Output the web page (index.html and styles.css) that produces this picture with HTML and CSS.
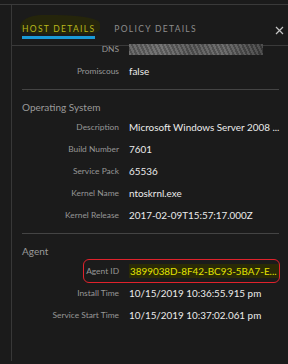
FILE: index.html
```html
<html>
  <head>
    <meta charset="utf-8">
    <title>Host Details</title>
    <link rel="stylesheet" href="styles.css">
  </head>
  <body>
    <div class="frame">
      <div class="rail"></div>
      <div class="panel">
        <div class="tabs">
          <span class="mark"></span>
          <span class="tab active">HOST DETAILS</span>
          <span class="tab">POLICY DETAILS</span>
          <svg class="close" width="9" height="9" viewBox="0 0 9 9"><path d="M1 1L8 8M8 1L1 8" stroke="#c4c4c4" stroke-width="1.2"/></svg>
        </div>

        <div class="row dns">
          <span class="lbl">DNS</span>
          <span class="val"><span class="blur"></span></span>
        </div>
        <div class="row">
          <span class="lbl">Promiscous</span>
          <span class="val">false</span>
        </div>

        <hr class="sep">
        <div class="head">Operating System</div>
        <div class="row">
          <span class="lbl">Description</span>
          <span class="val">Microsoft Windows Server 2008 ...</span>
        </div>
        <div class="row">
          <span class="lbl">Build Number</span>
          <span class="val">7601</span>
        </div>
        <div class="row">
          <span class="lbl">Service Pack</span>
          <span class="val">65536</span>
        </div>
        <div class="row">
          <span class="lbl">Kernel Name</span>
          <span class="val">ntoskrnl.exe</span>
        </div>
        <div class="row">
          <span class="lbl">Kernel Release</span>
          <span class="val">2017-02-09T15:57:17.000Z</span>
        </div>

        <hr class="sep">
        <div class="head">Agent</div>
        <div class="row agent">
          <span class="box"></span>
          <span class="lbl">Agent ID</span>
          <span class="val"><span class="hl">3899038D-8F42-BC93-5BA7-E...</span></span>
        </div>
        <div class="row">
          <span class="lbl">Install Time</span>
          <span class="val">10/15/2019 10:36:55.915 pm</span>
        </div>
        <div class="row">
          <span class="lbl">Service Start Time</span>
          <span class="val">10/15/2019 10:37:02.061 pm</span>
        </div>
      </div>
    </div>
  </body>
</html>
```

FILE: styles.css
```css
body {
  margin: 0;
  background: #1b1b1b;
  font-family: Lato, "Noto Sans", sans-serif;
  color: #e6e6e6;
}

.frame {
  margin-top: 4px;
  border-top: 1px solid #3a3a3a;
  display: flex;
  height: 356px;
}
.rail {
  width: 11px;
  flex: none;
}
.panel {
  flex: 1;
  min-width: 0;
  overflow: hidden;
  border-left: 1px solid #383838;
}

/* tabs */
.tabs {
  position: relative;
  height: 40px;
  border-bottom: 1px solid #3a3a3a;
  display: flex;
  align-items: flex-start;
  padding-left: 10px;
}
.mark {
  position: absolute;
  left: 8px; top: 10px;
  width: 80px; height: 19px;
  background: #25250b;
  border-radius: 30% 60% 20% 30% / 70% 50% 30% 40%;
}
.tab {
  position: relative;
  margin-top: 19px;
  font-size: 8.5px;
  letter-spacing: 1.3px;
  line-height: 11px;
  color: #8d8d8d;
  padding-bottom: 3px;
  margin-right: 19px;
}
.tab.active {
  color: #b9b81c;
  border-bottom: 3px solid #1a9ad6;
  padding-bottom: 1px;
}
.close {
  position: absolute;
  right: 4px; top: 21px;
}

/* rows */
.row {
  position: relative;
  display: flex;
  align-items: center;
  height: 22px;
}
.row.dns { margin-top: -8px; }
.lbl {
  width: 117px;
  text-align: right;
  font-size: 8.4px;
  color: #979797;
  padding-right: 10px;
  box-sizing: border-box;
  flex: none;
}
.val {
  font-size: 9.9px;
  color: #ececec;
  white-space: nowrap;
}
.blur {
  display: inline-block;
  width: 134px; height: 11px;
  vertical-align: middle;
  background:
    repeating-linear-gradient(65deg, rgba(255,255,255,.10) 0 2px, rgba(0,0,0,.12) 2px 4px),
    linear-gradient(90deg, #5a5a5a 0%, #666 25%, #515151 45%, #5e5e5e 70%, #3a3a3a 100%);
}

.sep {
  border: 0;
  border-top: 1px solid #444;
  margin: 7px 9px 0 10px;
}
.head {
  padding: 10px 0 2px 10px;
  font-size: 10px;
  line-height: 14px;
  color: #9a9a9a;
}

.agent .hl {
  background: #2a2a06;
  color: #e4e400;
  padding: 1px 2px 1px 1px;
}
.box {
  position: absolute;
  left: 71px; right: 8px; top: -1px; bottom: -1px;
  border: 1.5px solid #e0222c;
  border-radius: 6px;
}
```
